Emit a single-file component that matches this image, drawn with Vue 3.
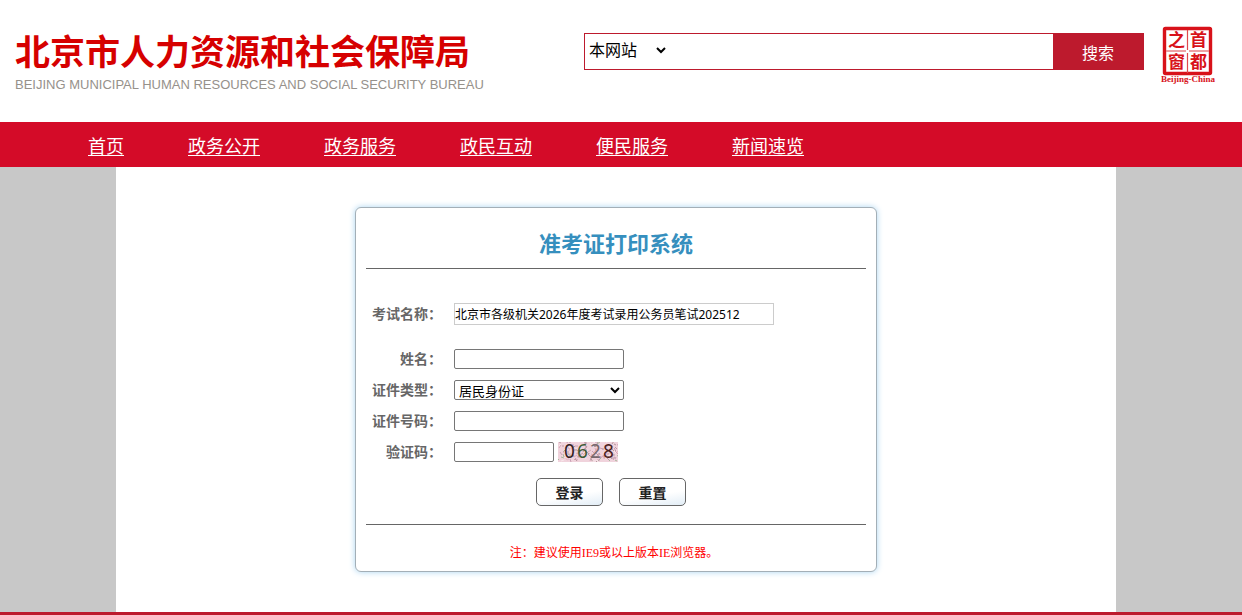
<template>
  <div class="page">
    <header class="header">
      <div class="brand">
        <h1>北京市人力资源和社会保障局</h1>
        <p>BEIJING MUNICIPAL HUMAN RESOURCES AND SOCIAL SECURITY BUREAU</p>
      </div>

      <form class="search" @submit.prevent>
        <select v-model="scope" class="search-scope" aria-label="搜索范围">
          <option>本网站</option>
        </select>
        <input v-model="keyword" class="search-input" type="text" aria-label="搜索内容">
        <button class="search-btn">搜索</button>
      </form>

      <a href="#" class="capital-logo" aria-label="首都之窗">
        <svg width="56" height="58" viewBox="0 0 56 58">
          <rect x="4.5" y="2.5" width="46" height="45" rx="1" fill="#fff" stroke="#d8121a" stroke-width="3.4" />
          <path d="M27.5 4v20M27.5 27v20" stroke="#e0494e" stroke-width="1.2" />
          <path d="M6 25h20M29 25h20" stroke="#e78387" stroke-width="1.6" />
          <text x="16.5" y="20" class="seal">之</text>
          <text x="38.5" y="20" class="seal">首</text>
          <text x="16.5" y="42" class="seal">窗</text>
          <text x="38.5" y="42" class="seal">都</text>
          <text x="28" y="56" class="seal-en">Beijing-China</text>
        </svg>
      </a>
    </header>

    <nav class="nav">
      <a v-for="item in navItems" :key="item" href="#">{{ item }}</a>
    </nav>

    <main class="main">
      <div class="container">
        <form class="card" @submit.prevent @reset.prevent="resetForm">
          <h2>准考证打印系统</h2>

          <div class="fields">
            <div class="row exam-row">
              <label for="exam">考试名称：</label>
              <input id="exam" class="exam" type="text" :value="examName" readonly>
            </div>
            <div class="row">
              <label for="name">姓名：</label>
              <input id="name" v-model="form.name" class="text" type="text">
            </div>
            <div class="row">
              <label for="idType">证件类型：</label>
              <select id="idType" v-model="form.idType" class="id-type">
                <option>居民身份证</option>
              </select>
            </div>
            <div class="row">
              <label for="idNumber">证件号码：</label>
              <input id="idNumber" v-model="form.idNumber" class="text" type="text">
            </div>
            <div class="row">
              <label for="code">验证码：</label>
              <input id="code" v-model="form.code" class="text code" type="text">
              <svg class="captcha" width="60" height="20" viewBox="0 0 60 20">
                <svg width="60" height="20" fill="none">
                  <rect width="60" height="20" fill="#f0d3dc" />
                  <path v-for="(line, i) in noise" :key="i" :d="line.d" :stroke="line.color" />
                </svg>
                <text x="6" y="16" fill="#33201f">0</text>
                <text x="19" y="16" fill="#3c5a35">6</text>
                <text x="32" y="16" fill="#77686d">2</text>
                <text x="45" y="16" fill="#4a2020">8</text>
              </svg>
            </div>
          </div>

          <div class="actions">
            <button type="submit">登录</button>
            <button type="reset">重置</button>
          </div>

          <p class="note">注：建议使用IE9或以上版本IE浏览器。</p>
        </form>
      </div>
    </main>
  </div>
</template>

<script setup>
import { ref, reactive } from 'vue'

const navItems = ['首页', '政务公开', '政务服务', '政民互动', '便民服务', '新闻速览']

const scope = ref('本网站')
const keyword = ref('')

const examName = '北京市各级机关2026年度考试录用公务员笔试202512'
const form = reactive({
  name: '',
  idType: '居民身份证',
  idNumber: '',
  code: ''
})

function resetForm() {
  form.name = ''
  form.idNumber = ''
  form.code = ''
}

// short strokes behind the captcha digits
const colors = ['#d9a9b8', '#bb9aa3', '#a7b69c', '#e8b5c4', '#c9a0b4', '#b39a9d', '#f8e6ea']
let seed = 628
function random(max) {
  seed = (seed * 16807) % 2147483647
  return seed % max
}
const noise = Array.from({ length: 170 }, () => ({
  d: `M${random(60)} ${random(20)}l${random(7) - 3} ${random(7) - 3}`,
  color: colors[random(colors.length)]
}))
</script>

<style>
body {
  margin: 0;
  background: #c8c8c8;
}
</style>

<style scoped>
.page {
  display: flex;
  flex-direction: column;
  min-height: 100vh;
  font-family: "Noto Sans", "Noto Sans CJK SC", sans-serif;
  font-size: 14px;
  color: #666;
}

.page * {
  box-sizing: border-box;
}

input,
select,
button {
  margin: 0;
  font-family: inherit;
}

.header {
  display: flex;
  align-items: flex-start;
  height: 122px;
  padding: 26px 26px 0 15px;
  background: #fff;
}

.brand h1 {
  margin: 0;
  font-family: "Noto Sans CJK SC", sans-serif;
  font-size: 35px;
  line-height: 48px;
  font-weight: bold;
  color: #d60000;
  white-space: nowrap;
}

.brand p {
  margin: 0;
  font-family: "Liberation Sans", Arial, sans-serif;
  font-size: 13px;
  line-height: 22px;
  color: #96918b;
  white-space: nowrap;
}

.search {
  display: flex;
  width: 560px;
  height: 37px;
  margin: 7px 16px 0 auto;
  border: 1px solid #bd1a2d;
}

.search-scope {
  width: 84px;
  height: 32px;
  padding: 0;
  border: none;
  background: #fff;
  font-size: 16px;
  color: #000;
}

.search-input {
  flex: 1;
  min-width: 0;
  border: none;
  outline: none;
  font-size: 16px;
}

.search-btn {
  width: 90px;
  padding: 0;
  border: none;
  background: #bd1a2d;
  color: #fff;
  font-size: 16px;
  cursor: pointer;
}

.capital-logo svg {
  display: block;
}

.seal {
  font-family: "Noto Sans CJK SC", sans-serif;
  font-size: 17px;
  font-weight: bold;
  fill: #d8121a;
  text-anchor: middle;
}

.seal-en {
  font-family: "Liberation Serif", serif;
  font-size: 9px;
  font-weight: bold;
  fill: #d8121a;
  text-anchor: middle;
}

.nav {
  display: flex;
  gap: 64px;
  padding: 3px 88px 0;
  background: #d40b28;
}

.nav a {
  font-size: 18px;
  line-height: 42px;
  color: #fff;
  text-underline-offset: 2px;
}

.main {
  flex: 1;
  display: flex;
  padding-right: 10px;
  border-bottom: 3px solid #bd1a2d;
}

.container {
  width: 1000px;
  margin: 0 auto;
  padding: 40px 0;
  background: #fff;
}

.card {
  width: 522px;
  margin: 0 auto;
  padding: 0 10px;
  border: 1px solid #a3afb7;
  border-radius: 6px;
  background: #fff;
  box-shadow: 0 0 6px #a9d4f0;
}

.card h2 {
  margin: 0;
  padding: 15px 0 5px;
  border-bottom: 1px solid #666;
  font-size: 22px;
  line-height: 40px;
  text-align: center;
  color: #368fbe;
}

.fields {
  padding-top: 34px;
}

.row {
  display: flex;
  align-items: center;
  height: 20px;
  margin-bottom: 11px;
}

.exam-row {
  height: 22px;
  margin-bottom: 24px;
}

.row label {
  width: 76px;
  margin-right: 12px;
  line-height: 20px;
  font-weight: bold;
  text-align: right;
}

.exam {
  width: 320px;
  height: 22px;
  padding: 0;
  border: 1px solid #ccc;
  font-size: 12px;
  color: #000;
}

.text,
.id-type {
  width: 170px;
  height: 20px;
  padding: 0 2px;
  border: 1px solid #767676;
  border-radius: 2px;
  background: #fff;
  font-size: 13px;
  color: #000;
}

.id-type {
  padding: 0;
}

.code {
  width: 100px;
  margin-right: 4px;
}

.captcha {
  overflow: visible;
  font-family: "Noto Sans", sans-serif;
  font-size: 19px;
}

.actions {
  display: flex;
  gap: 16px;
  padding: 5px 0 18px 170px;
  border-bottom: 1px solid #666;
}

.actions button {
  width: 67px;
  height: 28px;
  padding: 0;
  border: 1px solid #666;
  border-radius: 5px;
  background: linear-gradient(170deg, #fff 60%, #e2edf6);
  font-size: 14px;
  font-weight: bold;
  color: #222;
  cursor: pointer;
}

.note {
  margin: 0;
  padding: 18px 4px 8px 0;
  font-family: "Liberation Serif", "Noto Sans CJK SC", serif;
  font-size: 12px;
  line-height: 20px;
  text-align: center;
  color: #f00;
}
</style>
